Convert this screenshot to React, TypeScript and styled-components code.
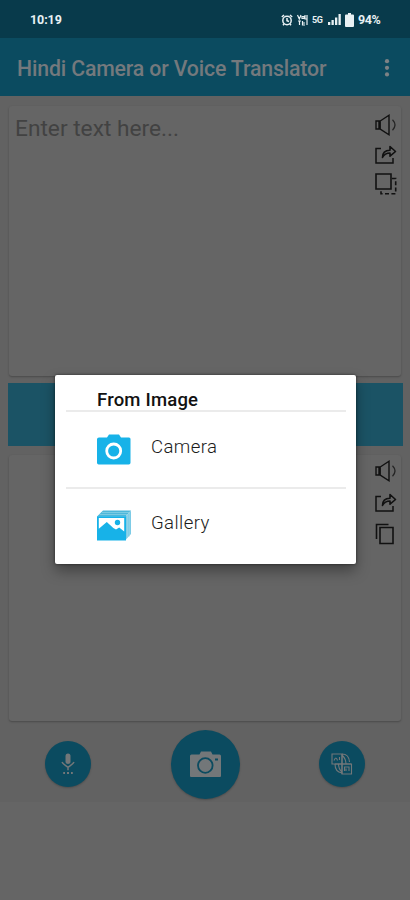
import React from "react";
import styled, { createGlobalStyle } from "styled-components";

const GlobalStyle = createGlobalStyle`
  * { box-sizing: border-box; }
  body { margin: 0; background: #656565; font-family: Roboto, sans-serif; }
  svg { display: block; overflow: visible; flex: none; }
`;

const Screen = styled.div`
  position: relative;
  width: 410px;
  height: 900px;
  overflow: hidden;
  display: flex;
  flex-direction: column;
  background: #656565;
`;

const StatusBar = styled.header`
  height: 38px;
  padding: 1px 29px 0 30px;
  display: flex;
  align-items: center;
  justify-content: space-between;
  background: #083a4b;
  color: #e9f1f4;
  font-size: 12.5px;
  font-weight: 700;
`;

const Clock = styled.span`
  letter-spacing: -0.1px;
`;

const StatusIcons = styled.div`
  display: flex;
  align-items: center;
  gap: 4px;
`;

const Network = styled.span`
  width: 12px;
  font-size: 9px;
  font-weight: 700;
  letter-spacing: -0.4px;
`;

const Percent = styled.span`
  width: 23px;
  white-space: nowrap;
  letter-spacing: -0.4px;
`;

const AppBar = styled.div`
  height: 58px;
  padding: 3px 16px 0 17px;
  display: flex;
  align-items: center;
  justify-content: space-between;
  background: #0b4b60;
`;

const Title = styled.h1`
  margin: 0;
  color: #74797d;
  font-size: 21.3px;
  font-weight: 500;
  letter-spacing: -0.16px;
  white-space: nowrap;
`;

const Content = styled.main`
  height: 706px;
  padding: 10px 8px 0;
  background: #626262;
`;

const TextCard = styled.section<{ $height: number; $top: number }>`
  height: ${(p) => p.$height}px;
  margin: 0 1px;
  padding: ${(p) => p.$top}px 4px 0 6px;
  display: flex;
  justify-content: space-between;
  border-radius: 3px;
  background: #656565;
  box-shadow: 0 1px 2px rgba(0, 0, 0, 0.25);
`;

const Placeholder = styled.p`
  margin: 0;
  color: #424242;
  font-size: 22.7px;
  line-height: 29px;
`;

const Tools = styled.div<{ $gap: number }>`
  margin-left: auto;
  display: flex;
  flex-direction: column;
  gap: ${(p) => p.$gap}px;
`;

const LanguageBar = styled.div`
  height: 63px;
  margin: 7px -1px 9px 0;
  background: #1b5365;
`;

const Actions = styled.footer`
  height: 86px;
  padding: 0 37px;
  display: flex;
  align-items: center;
  justify-content: space-between;
`;

const RoundButton = styled.button<{ $size: number }>`
  width: ${(p) => p.$size}px;
  height: ${(p) => p.$size}px;
  padding: 0;
  border: 0;
  border-radius: 50%;
  display: grid;
  place-items: center;
  background: #0b4b60;
  color: #737779;
  box-shadow: 0 1px 2px rgba(0, 0, 0, 0.22);
`;

const Dialog = styled.section`
  position: absolute;
  left: 55px;
  top: 375px;
  width: 301px;
  height: 189px;
  padding: 14px 10px 0 11px;
  border-radius: 2px;
  background: #fff;
  box-shadow: 0 7px 14px rgba(0, 0, 0, 0.35), 0 0 3px rgba(0, 0, 0, 0.55);
`;

const DialogTitle = styled.h2`
  height: 23px;
  margin: 0;
  padding-left: 31px;
  border-bottom: 2px solid #ebebeb;
  color: #121212;
  font-size: 18.5px;
  font-weight: 500;
  letter-spacing: 0.2px;
  line-height: 22px;
`;

const Option = styled.div<{ $divided?: boolean }>`
  height: ${(p) => (p.$divided ? 77 : 72)}px;
  padding-left: 31px;
  display: flex;
  align-items: center;
  gap: 20px;
  border-bottom: ${(p) => (p.$divided ? "2px solid #ebebeb" : "0")};
`;

const OptionLabel = styled.span`
  padding-bottom: 5px;
  color: #1c1c1c;
  font-size: 18.6px;
  font-weight: 300;
  letter-spacing: 0.4px;
`;

const SpeakerIcon = () => (
  <svg width="22" height="22" viewBox="0 0 22 22" fill="none" stroke="#111" strokeWidth="1.4">
    <path d="M5.2 7H1v8h4.2M5.2 7 14 1.2v19.6L5.2 15zM4 7v8" />
    <path d="M17.5 5.8q5 5.2 0 10.4" stroke="#252525" strokeWidth="1.3" />
  </svg>
);

const ShareIcon = () => (
  <svg width="22" height="20" viewBox="0 0 22 20" fill="none" stroke="#111" strokeWidth="1.5">
    <path d="M6 3.5H1V18h17v-5" />
    <path d="M7.5 12.5c0-5 3-7.3 7.5-7.3V1.5l5.5 5-5.5 4.7V8c-4 0-6 1.6-7.5 4.5z" strokeWidth="1.6" strokeLinejoin="round" />
  </svg>
);

const SelectCopyIcon = () => (
  <svg width="22" height="22" viewBox="0 0 22 22" fill="none" stroke="#111" strokeWidth="1.6">
    <path d="M1 1h15v15H1z" />
    <path d="M17 5.5h3.7v15.2H6V16" strokeDasharray="4 2.4" />
  </svg>
);

const CopyIcon = () => (
  <svg width="22" height="22" viewBox="0 0 22 22" fill="none" stroke="#111" strokeWidth="1.6">
    <path d="M1.5 16V1.5h12M5 4.5h13v16H5z" />
  </svg>
);

const AlarmIcon = () => (
  <svg width="12" height="12" viewBox="0 0 12 12" fill="none" stroke="currentColor" strokeWidth="1.5">
    <circle cx="6" cy="6.5" r="4.2" />
    <path d="M6 4v2.8l2 .7M.8 3 3 1m6 0 2.2 2M3 10l-1 1.3M9 10l1 1.3" />
  </svg>
);

const VolteIcon = () => (
  <svg width="11" height="12" viewBox="0 0 11 12" fill="none" stroke="currentColor" strokeWidth="1.2">
    <path d="m.5 1 1.8 4L4 1M5 2.5h2v2H5zM8 1v4h2M1 7h3M2.5 7v4M5.5 7v4H8M5.5 9H8M10 1v10" />
  </svg>
);

const SignalIcon = () => (
  <svg width="13" height="11" viewBox="0 0 13 11" fill="currentColor">
    <path d="M0 8h2.3v3H0zM3.5 6h2.3v5H3.5zM7 3.5h2.3V11H7zM10.5 0h2.3v11h-2.3z" />
  </svg>
);

const BatteryIcon = () => (
  <svg width="9" height="14" viewBox="0 0 9 14" fill="currentColor">
    <path d="M3 0h3v1.5h2q1 0 1 1V13q0 1-1 1H1q-1 0-1-1V2.5q0-1 1-1h2z" />
  </svg>
);

const MenuIcon = () => (
  <svg width="14" height="20" viewBox="0 0 14 20" fill="#7d8285">
    <circle cx="7" cy="2.2" r="2.1" />
    <circle cx="7" cy="8.8" r="2.1" />
    <circle cx="7" cy="15.4" r="2.1" />
  </svg>
);

const MicIcon = () => (
  <svg width="14" height="22" viewBox="0 0 14 22" fill="none" stroke="currentColor" strokeWidth="1.5">
    <rect x="4.5" y=".5" width="5" height="10.5" rx="2.5" fill="currentColor" stroke="none" />
    <path d="M1 9q1 2 6 5.3Q12 11 13 9M7 13.8v3.4" />
    <path d="M2.2 20h1.8m2 0h2m2 0h1.8" strokeWidth="1.8" />
  </svg>
);

const PhotoIcon = () => (
  <svg width="31" height="26" viewBox="0 0 31 26">
    <path fill="currentColor" d="M1.5 3.5h8l1.5-3h10l1.5 3h7q1.5 0 1.5 1.5v20q0 1-1 1H1q-1 0-1-1V5q0-1.5 1.5-1.5z" />
    <circle cx="15.3" cy="14.5" r="7.3" fill="none" stroke="#0b4b60" strokeWidth="1.8" />
    <path d="M25 7.5h3v2h-3z" fill="#0b4b60" />
  </svg>
);

const TranslateIcon = () => (
  <svg width="22" height="22" viewBox="0 0 22 22" fill="none" stroke="currentColor" strokeWidth="1.1">
    <path d="M1 1h10v10H1zM3 7.5q2-5 3.5 0M8.5 4v3M11 11h9.5v10H11z" />
    <path d="M13.5 18v-4h4.5v4M15 18v-2.5" />
    <path d="M11 1q7 0 7.5 8M11 2q4 4 4 9M4 11q0 8 7 9M7.5 11q0 5 3.5 8M4 11h16M11 1v20" />
  </svg>
);

const CameraIcon = () => (
  <svg width="34" height="31" viewBox="0 0 34 31">
    <path fill="#17b2e8" d="M2 3.5h8l2-3h10l2 3h8q1.5 0 1.5 1.5v23.8q0 1.7-1.7 1.7H1.7Q0 30.5 0 28.8V5.3Q0 3.5 2 3.5z" />
    <circle cx="16.7" cy="17" r="7" fill="none" stroke="#fff" strokeWidth="2.8" />
  </svg>
);

const GalleryIcon = () => (
  <svg width="34" height="31" viewBox="0 0 34 31">
    <path fill="#4eb7da" d="m0 6.5 6-6h28l-5.5 6z" />
    <path fill="#7dcbe6" d="m28.5 6.5 5.5-6V24l-5.5 6z" />
    <path fill="none" stroke="#9ad8ea" strokeWidth=".6" d="M2.5 4.5h28V28M5 2.5h27.3v24" />
    <path fill="#fff" d="M.8 7.5h27.6V29H.8z" />
    <path fill="#17b2e8" d="M0 6.3h29v24.2H0zM1.8 8v10.7L9.8 12l6.5 6 2.7 1.5 3.2-2 5 4V8z" fillRule="evenodd" />
    <circle cx="20.5" cy="12.5" r="2.7" fill="#17b2e8" />
  </svg>
);

export default function App() {
  return (
    <>
      <GlobalStyle />
      <Screen>
        <StatusBar>
          <Clock>10:19</Clock>
          <StatusIcons>
            <AlarmIcon />
            <VolteIcon />
            <Network>5G</Network>
            <SignalIcon />
            <BatteryIcon />
            <Percent>94%</Percent>
          </StatusIcons>
        </StatusBar>
        <AppBar>
          <Title>Hindi Camera or Voice Translator</Title>
          <MenuIcon />
        </AppBar>
        <Content>
          <TextCard $height={270} $top={8}>
            <Placeholder>Enter text here...</Placeholder>
            <Tools $gap={8.5}>
              <SpeakerIcon />
              <ShareIcon />
              <SelectCopyIcon />
            </Tools>
          </TextCard>
          <LanguageBar />
          <TextCard $height={266} $top={5}>
            <Tools $gap={10.5}>
              <SpeakerIcon />
              <ShareIcon />
              <CopyIcon />
            </Tools>
          </TextCard>
          <Actions>
            <RoundButton $size={46} aria-label="Voice input">
              <MicIcon />
            </RoundButton>
            <RoundButton $size={69} aria-label="Image input">
              <PhotoIcon />
            </RoundButton>
            <RoundButton $size={46} aria-label="Translate">
              <TranslateIcon />
            </RoundButton>
          </Actions>
        </Content>
        <Dialog role="dialog" aria-label="From Image">
          <DialogTitle>From Image</DialogTitle>
          <Option $divided>
            <CameraIcon />
            <OptionLabel>Camera</OptionLabel>
          </Option>
          <Option>
            <GalleryIcon />
            <OptionLabel>Gallery</OptionLabel>
          </Option>
        </Dialog>
      </Screen>
    </>
  );
}
